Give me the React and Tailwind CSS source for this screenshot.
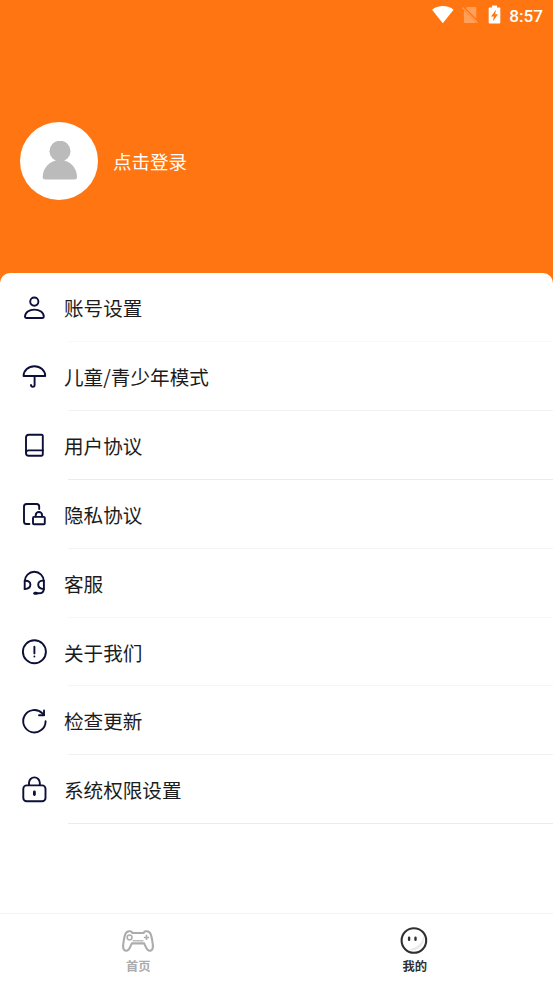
const CJK = "font-['Noto_Sans_CJK_SC','Noto_Sans',sans-serif]";

const icons = {
  account: (
    <>
      <circle cx="14.3" cy="9.6" r="4.1" />
      <path d="M6.2 26Q5 26 5 24.8C5 20.4 9.2 17.6 14.4 17.6S23.8 20.4 23.8 24.8Q23.8 26 22.6 26Z" />
    </>
  ),
  umbrella: (
    <>
      <path d="M3.6 15C3.6 9.4 8.4 5.3 14.4 5.3S25.2 9.4 25.2 15Z" />
      <path d="M14.6 15V24a1.8 1.8 0 0 1-3.6 0" />
    </>
  ),
  book: (
    <>
      <path d="M8.8 4.7H21.6Q22.8 4.7 22.8 5.9V24.5Q22.8 25.7 21.6 25.7H8.8Q6 25.7 6 22.9V7.5Q6 4.7 8.8 4.7Z" />
      <path d="M6.2 22.2Q6.4 20.4 8.6 20.4H22.8" />
    </>
  ),
  privacy: (
    <>
      <path d="M9.4 25H6.6Q4 25 4 22.4V7.6Q4 5 6.6 5H16.6Q19.2 5 19.2 7.6V10" />
      <rect x="13" y="17.9" width="11.8" height="7.4" rx="1" />
      <path d="M15.7 17.6V16.2a3.2 3.2 0 0 1 6.4 0v1.4" />
    </>
  ),
  service: (
    <>
      <path d="M4.7 21V13.4a9.6 9.6 0 0 1 19.2 0V20.4Q23.9 25.3 18.8 25.3H16" />
      <path d="M4.7 12.8C8.8 12.4 10.4 14.2 10.4 16.6S8.8 20.9 4.7 21.1" />
      <path d="M23.9 12.6C19.8 12.4 18.2 14.2 18.2 16.6S19.8 20.9 23.9 21.1" />
      <path d="M14.8 25.2h1.6" strokeWidth="3" />
    </>
  ),
  about: (
    <>
      <circle cx="14.4" cy="14.8" r="11.5" />
      <path d="M14.4 9.8V16.4M14.4 19.5v.1" />
    </>
  ),
  refresh: (
    <>
      <path d="M25.6 16.2a11.2 11.2 0 1 1-3.2-7.8L24 10.1" />
      <path d="M24 5.4V10.3H19" />
    </>
  ),
  lock: (
    <>
      <rect x="3.3" y="11.4" width="22.2" height="15.9" rx="3.4" />
      <path d="M9 11V8.8a5.4 5.4 0 0 1 10.8 0V11" />
      <path d="M14.4 17.9v2.6" strokeWidth="2.8" />
    </>
  ),
};

const rows = [
  ["account", "账号设置", "h-[69px] border-[#f8f8f8]"],
  ["umbrella", "儿童/青少年模式", "h-[69px] border-[#f2f2f2]"],
  ["book", "用户协议", "h-[69px] border-[#ececec]"],
  ["privacy", "隐私协议", "h-[69px] border-[#f4f4f4]"],
  ["service", "客服", "h-[69px] border-[#f7f7f7]"],
  ["about", "关于我们", "h-[68px] border-[#f5f5f5]"],
  ["refresh", "检查更新", "h-[69px] border-[#f0f0f0]"],
  ["lock", "系统权限设置", "h-[69px] border-[#ececec]"],
];

function StatusBar() {
  return (
    <div className="flex h-[30px] items-center justify-end pr-[10px] text-white">
      <svg className="mr-[8px]" width="22" height="18" viewBox="0 0 22 18" fill="currentColor">
        <path d="M0 3.7C6-1.2 16-1.2 21.6 3.7L10.8 17.3Z" />
      </svg>
      <svg className="mr-[10px] opacity-30" width="16" height="18" viewBox="0 0 16 18" fill="currentColor">
        <path d="M5.3 1H13Q14.3 1 14.3 2.3V12.7L3.8 2.3Z" />
        <path d="M1.9 4.2L14.1 16.2Q13.8 17 13 17H3.2Q1.9 17 1.9 15.7Z" />
        <path d="M.3 1.4L15.5 16.6" stroke="currentColor" strokeWidth="1.3" />
      </svg>
      <svg className="mr-[8px] -mt-px" width="13" height="19" viewBox="0 0 13 19">
        <path d="M4 .6H9V2.4H11.4Q12.3 2.4 12.3 3.3V17.6Q12.3 18.5 11.4 18.5H1.6Q.7 18.5 .7 17.6V3.3Q.7 2.4 1.6 2.4H4Z" fill="currentColor" />
        <path d="M8 4.8L7.2 9.2H10L5 16.2L5.8 11.6H3Z" fill="#ff7511" />
      </svg>
      <span className="mt-[3px] font-[Roboto,sans-serif] text-[17.2px] leading-none font-medium">8:57</span>
    </div>
  );
}

function Profile() {
  return (
    <div className="flex h-[243px] items-center pl-5">
      <div className="mt-[19px] flex h-[78px] w-[78px] items-center justify-center rounded-full bg-white">
        <svg width="36" height="40" viewBox="0 0 36 40" fill="#bbb">
          <circle cx="19" cy="10.2" r="10.5" />
          <path d="M1.7 36C1.7 27 8.7 19 19 19S36 27 36 36Q36 38.5 33.2 38.5H4.5Q1.7 38.5 1.7 36Z" />
        </svg>
      </div>
      <span className={`${CJK} mt-[19px] ml-[15px] text-[18.5px] leading-none text-white`}>点击登录</span>
    </div>
  );
}

function MenuRow({ icon, label, style }) {
  return (
    <div className={`flex items-stretch pl-5 ${style}`}>
      <svg
        className="mt-[19px] shrink-0"
        width="30"
        height="30"
        viewBox="0 0 30 30"
        fill="none"
        stroke="#0c0f38"
        strokeWidth="1.9"
        strokeLinecap="round"
        strokeLinejoin="round"
      >
        {icons[icon]}
      </svg>
      <div className="ml-[18px] flex flex-1 flex-col border-inherit">
        <span className={`${CJK} -ml-1 flex flex-1 items-center pt-[2px] text-[19.6px] leading-none text-[#1c1c1c]`}>{label}</span>
        <div className="border-b border-inherit" />
      </div>
    </div>
  );
}

function TabBar() {
  return (
    <nav className={`${CJK} grid h-[70px] grid-cols-2 border-t border-[#f3f3f3] text-[12.3px] font-bold`}>
      <div className="flex flex-col items-center pt-3 text-[#acacac]">
        <svg width="34" height="30" viewBox="0 0 34 30" fill="none" stroke="currentColor" strokeWidth="2.1" strokeLinejoin="round">
          <path d="M8 5.2H9.4Q10.6 5.2 11.4 7H22.6Q23.4 5.2 24.6 5.2H26C29.6 5.4 30.4 9.4 31.4 15.6C32.6 21.4 31.8 24.6 29 24.8C25.6 25 25.2 21.4 23.2 17.4H10.8C8.8 21.4 8.4 25 5 24.8C2.2 24.6 1.4 21.4 2.6 15.6C3.6 9.4 4.4 5.4 8 5.2Z" />
          <path d="M11.6 14.8H22.4" strokeWidth="1.2" />
          <circle cx="8.6" cy="11.4" r="2.4" strokeWidth="1.5" />
          <path d="M25.5 8.8V14M22.9 11.4H28.1" strokeWidth="1.5" />
        </svg>
        <span className="mt-[4px] leading-none">首页</span>
      </div>
      <div className="flex flex-col items-center pt-3 text-[#303030]">
        <svg width="30" height="30" viewBox="0 0 30 30" fill="none">
          <path d="M23.4 9C23 17 17 22 8.5 23.4A11.5 11.5 0 0 0 23.4 9Z" fill="#ebebeb" />
          <circle cx="13.9" cy="14.5" r="12.3" stroke="currentColor" strokeWidth="2.1" />
          <path d="M9.1 11.7V13.7M15.5 11.7V13.7" stroke="currentColor" strokeWidth="2.4" strokeLinecap="round" />
        </svg>
        <span className="mt-[4px] leading-none">我的</span>
      </div>
    </nav>
  );
}

export default function App() {
  return (
    <div className="flex h-[983px] w-[553px] flex-col overflow-hidden bg-white">
      <header className="-mb-[12px] h-[285px] shrink-0 bg-[#ff7511]">
        <StatusBar />
        <Profile />
      </header>
      <main className="relative flex-1 rounded-t-[10px] bg-white">
        {rows.map(([icon, label, style]) => (
          <MenuRow key={icon} icon={icon} label={label} style={style} />
        ))}
      </main>
      <TabBar />
    </div>
  );
}
